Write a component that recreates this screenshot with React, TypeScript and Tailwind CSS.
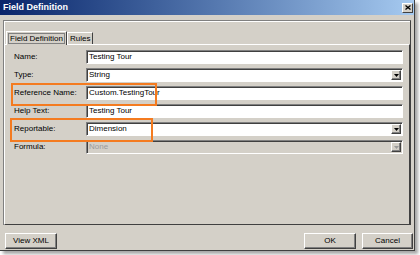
import React from 'react';

const FONT = { fontFamily: '"Liberation Sans", Arial, sans-serif' };

const ROWS: { label: string; value: string; kind: 'text' | 'select' | 'disabled' }[] = [
  { label: 'Name:', value: 'Testing Tour', kind: 'text' },
  { label: 'Type:', value: 'String', kind: 'select' },
  { label: 'Reference Name:', value: 'Custom.TestingTour', kind: 'text' },
  { label: 'Help Text:', value: 'Testing Tour', kind: 'text' },
  { label: 'Reportable:', value: 'Dimension', kind: 'select' },
  { label: 'Formula:', value: 'None', kind: 'disabled' },
];

function DropButton({ disabled }: { disabled?: boolean }) {
  return (
    <div className="ml-auto mr-[1px] flex h-[10px] w-[10px] items-center justify-center border border-t-white border-l-white border-b-[#404040] border-r-[#404040] bg-[#d4d0c8] shadow-[inset_-1px_-1px_0_#808080]">
      <svg width="5" height="3" viewBox="0 0 5 3">
        <path d="M0 0h5L2.5 3z" fill={disabled ? '#9a9a9a' : '#000'} />
      </svg>
    </div>
  );
}

function Field({ value, kind }: { value: string; kind: 'text' | 'select' | 'disabled' }) {
  const bg = kind === 'disabled' ? 'bg-[#d4d0c8] text-[#9a9a9a]' : 'bg-white text-black';
  return (
    <div
      className={`flex h-[14px] flex-1 items-center border border-t-[#808080] border-l-[#808080] border-b-white border-r-white pl-[2px] shadow-[inset_1px_1px_0_#404040] ${bg}`}
    >
      <span className="leading-none">{value}</span>
      {kind !== 'text' && <DropButton disabled={kind === 'disabled'} />}
    </div>
  );
}

function Button({ label, className }: { label: string; className?: string }) {
  return (
    <div
      className={`flex h-[16px] items-center justify-center border border-t-white border-l-white border-b-[#404040] border-r-[#404040] bg-[#d4d0c8] shadow-[inset_-1px_-1px_0_#808080] text-[8px] text-black ${className ?? ''}`}
    >
      {label}
    </div>
  );
}

export default function App() {
  return (
    <div className="h-[255px] w-[420px] overflow-hidden bg-white" style={FONT}>
      <div className="flex h-[251px] w-[415px] flex-col border-r border-b border-[#404040] bg-[#d4d0c8] shadow-[3px_3px_3px_rgba(0,0,0,0.35)]">
        {/* title bar */}
        <div className="flex h-[15px] items-center bg-gradient-to-r from-[#0a246a] to-[#a6caf0] pl-[3px] pr-[1px]">
          <span className="text-[9px] font-bold leading-none text-white">Field Definition</span>
          <div className="ml-auto flex h-[10px] w-[11px] items-center justify-center border border-t-white border-l-white border-b-[#404040] border-r-[#404040] bg-[#d4d0c8]">
            <svg width="6" height="5" viewBox="0 0 6 5">
              <path d="M0.5 0.5l5 4M5.5 0.5l-5 4" stroke="#000" strokeWidth="1.3" />
            </svg>
          </div>
        </div>

        {/* frame */}
        <div className="mx-[3px] mt-[5px] h-[205px] border-t border-l border-r border-t-[#808080] border-l-[#808080] border-r-[#404040] shadow-[inset_1px_1px_0_#fff]">
          <div className="flex h-[23px] items-end pl-[2px]">
            <div className="relative z-10 -mb-[1px] flex h-[14px] items-center border border-b-0 border-t-white border-l-white border-r-[#404040] bg-[#d4d0c8] px-[1px]">
              <span className="border border-[#808080] px-[1px] text-[8px] leading-[9px] text-black">Field Definition</span>
            </div>
            <div className="flex h-[12px] items-center border border-b-0 border-t-white border-l-white border-r-[#404040] px-[2px] text-[8px] text-black">
              Rules
            </div>
          </div>
          <div className="relative h-[181px] w-[406px] border border-t-white border-l-white border-b-[#404040] border-r-[#404040] pl-[9px] pr-[6px] pt-[5px]">
            <div className="flex flex-col gap-[4px] text-[8px]">
              {ROWS.map((r) => (
                <div key={r.label} className="flex items-center">
                  <span className="w-[72px] text-black">{r.label}</span>
                  <Field value={r.value} kind={r.kind} />
                </div>
              ))}
            </div>
            <div className="absolute left-[6px] top-[38px] h-[23px] w-[146px] border-2 border-[#f47b20]" />
            <div className="absolute left-[5px] top-[73px] h-[24px] w-[143px] border-2 border-[#f47b20]" />
          </div>
        </div>

        {/* buttons */}
        <div className="mt-[8px] flex items-center pl-[5px] pr-[1px]">
          <Button label="View XML" className="w-[52px]" />
          <Button label="OK" className="ml-auto w-[52px]" />
          <Button label="Cancel" className="ml-[6px] w-[51px]" />
        </div>
      </div>
    </div>
  );
}
